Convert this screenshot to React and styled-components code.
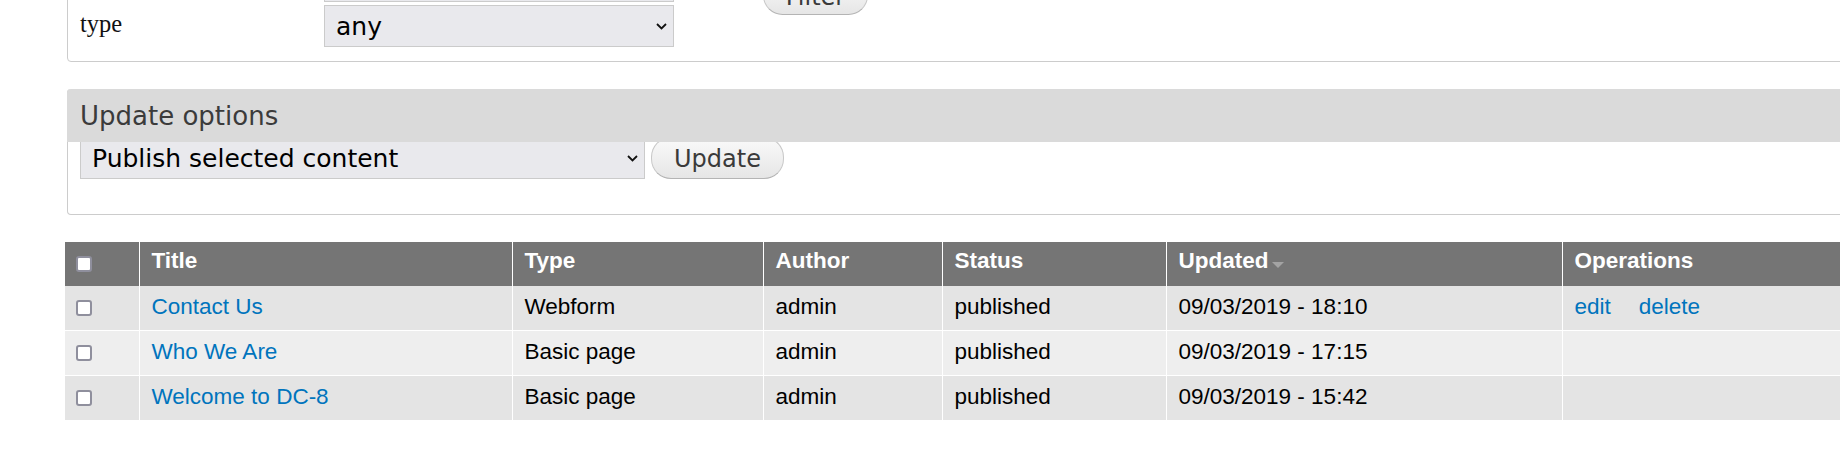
import React from "react";
import styled, { createGlobalStyle } from "styled-components";

const GlobalStyle = createGlobalStyle`
  html, body {
    margin: 0;
    padding: 0;
    background: #fff;
    overflow: hidden;
  }
`;

const sans = `"DejaVu Sans", "Liberation Sans", sans-serif`;
const tableFont = `"Liberation Sans", Arial, sans-serif`;

const nodes = [
  { title: "Contact Us", type: "Webform", author: "admin", status: "published", updated: "09/03/2019 - 18:10", ops: true },
  { title: "Who We Are", type: "Basic page", author: "admin", status: "published", updated: "09/03/2019 - 17:15", ops: false },
  { title: "Welcome to DC-8", type: "Basic page", author: "admin", status: "published", updated: "09/03/2019 - 15:42", ops: false },
];

const Page = styled.div`
  width: 1960px;
  margin-top: -60px;
  padding-left: 65px;
  box-sizing: border-box;
`;

const FilterFieldset = styled.div`
  margin: 0 2px;
  border: 1px solid #cccccc;
  border-radius: 4px;
  padding: 19px 12px 14px;
  display: flex;
  align-items: flex-start;
`;

const FilterGrid = styled.div`
  display: grid;
  grid-template-columns: 244px 350px;
  row-gap: 3px;
`;

const FilterLabel = styled.div`
  font-family: "Liberation Serif", "Times New Roman", serif;
  font-size: 24.5px;
  color: #111;
  padding-top: 5px;
`;

const SelectWrap = styled.div`
  position: relative;
  width: ${p => p.width}px;
  height: 42px;
`;

const Select = styled.select`
  appearance: none;
  -webkit-appearance: none;
  width: 100%;
  height: 100%;
  box-sizing: border-box;
  margin: 0;
  padding: 0 30px 0 11px;
  border: 1px solid #cbcbcb;
  border-radius: 0;
  background: #e9e9ed;
  color: #000;
  font-family: ${sans};
  font-size: 25px;
`;

const Chevron = styled.svg`
  position: absolute;
  right: 7px;
  top: 50%;
  margin-top: -3px;
  pointer-events: none;
`;

const Button = styled.button`
  height: ${p => p.h}px;
  width: ${p => p.w}px;
  margin: 0;
  padding: 2px 0 0;
  border: 1px solid #c8c8c8;
  border-bottom-color: #b4b4b4;
  border-radius: 20px;
  background: linear-gradient(#fafafa, #e6e6e6);
  color: #3a3a3a;
  font-family: ${sans};
  font-size: 24px;
`;

const FilterButton = styled(Button)`
  margin-left: 89px;
  margin-top: 16px;
`;

const OptionsFieldset = styled.div`
  margin: 27px 2px 0;
  border: 1px solid #cccccc;
  border-top: 0;
  border-radius: 4px;
  padding: 0 12px 35px;
`;

const Legend = styled.div`
  position: relative;
  z-index: 1;
  margin: 0 -13px;
  height: 53px;
  padding-left: 13px;
  display: flex;
  align-items: center;
  background: #dadada;
  border-radius: 4px 4px 0 0;
  font-family: ${sans};
  font-size: 26px;
  color: #3b3b3b;
`;

const ActionRow = styled.div`
  display: flex;
  gap: 6px;
  margin-top: -5px;
`;

const Table = styled.table`
  margin-top: 27px;
  width: 1895px;
  table-layout: fixed;
  border-collapse: collapse;
  font-family: ${tableFont};
  font-size: 22.5px;
  line-height: 26px;
`;

const Th = styled.th`
  box-sizing: border-box;
  width: ${p => p.w ? `${p.w}px` : "auto"};
  background: #757575;
  color: #fff;
  font-weight: bold;
  text-align: left;
  padding: 6px 12px 12px;
  border-left: 1px solid #fff;
  white-space: nowrap;
  &:first-child {
    border-left: 0;
  }
`;

const Row = styled.tr`
  background: ${p => (p.even ? "#eeeeee" : "#e4e4e4")};
  border-bottom: 1px solid #fff;
`;

const Td = styled.td`
  padding: 8px 12px 10px;
  border-left: 1px solid #fff;
  color: #000;
  white-space: nowrap;
`;

const CheckCell = styled.td`
  padding: 0 0 0 11px;
  vertical-align: middle;
`;

const CheckHead = styled(Th)`
  padding: 0 0 0 11px;
  vertical-align: middle;
`;

const Check = styled.input.attrs({ type: "checkbox" })`
  appearance: none;
  -webkit-appearance: none;
  display: block;
  width: 16px;
  height: 16px;
  margin: 0;
  box-sizing: border-box;
  border: 2px solid #8f8f9d;
  border-radius: 3px;
  background: #fff;
`;

const Link = styled.a`
  color: #0074bd;
  text-decoration: none;
`;

const Ops = styled.ul`
  display: flex;
  gap: 28px;
  margin: 0;
  padding: 0;
  list-style: none;
`;

const SortArrow = styled.svg`
  margin-left: 3px;
  vertical-align: baseline;
`;

function ChevronIcon() {
  return (
    <Chevron width="11" height="7" viewBox="0 0 11 7">
      <path d="M1 1l4.5 4.5L10 1" fill="none" stroke="#111" strokeWidth="1.8" />
    </Chevron>
  );
}

function Dropdown({ width, value }) {
  return (
    <SelectWrap width={width}>
      <Select defaultValue={value}>
        <option>{value}</option>
      </Select>
      <ChevronIcon />
    </SelectWrap>
  );
}

export default function App() {
  return (
    <>
      <GlobalStyle />
      <Page>
        <FilterFieldset>
          <FilterGrid>
            <FilterLabel>status</FilterLabel>
            <Dropdown width={350} value="any" />
            <FilterLabel>type</FilterLabel>
            <Dropdown width={350} value="any" />
          </FilterGrid>
          <FilterButton w={105} h={39}>Filter</FilterButton>
        </FilterFieldset>

        <OptionsFieldset>
          <Legend>Update options</Legend>
          <ActionRow>
            <Dropdown width={565} value="Publish selected content" />
            <Button w={133} h={42}>Update</Button>
          </ActionRow>
        </OptionsFieldset>

        <Table>
          <thead>
            <tr>
              <CheckHead w={74}><Check /></CheckHead>
              <Th w={373}>Title</Th>
              <Th w={251}>Type</Th>
              <Th w={179}>Author</Th>
              <Th w={224}>Status</Th>
              <Th w={396}>
                Updated
                <SortArrow width="12" height="6" viewBox="0 0 12 6">
                  <path d="M0 0h12L6 6z" fill="#a3a3a3" />
                </SortArrow>
              </Th>
              <Th>Operations</Th>
            </tr>
          </thead>
          <tbody>
            {nodes.map((n, i) => (
              <Row key={n.title} even={i % 2 === 1}>
                <CheckCell><Check /></CheckCell>
                <Td><Link href="#">{n.title}</Link></Td>
                <Td>{n.type}</Td>
                <Td>{n.author}</Td>
                <Td>{n.status}</Td>
                <Td>{n.updated}</Td>
                <Td>
                  {n.ops && (
                    <Ops>
                      <li><Link href="#">edit</Link></li>
                      <li><Link href="#">delete</Link></li>
                    </Ops>
                  )}
                </Td>
              </Row>
            ))}
          </tbody>
        </Table>
      </Page>
    </>
  );
}
